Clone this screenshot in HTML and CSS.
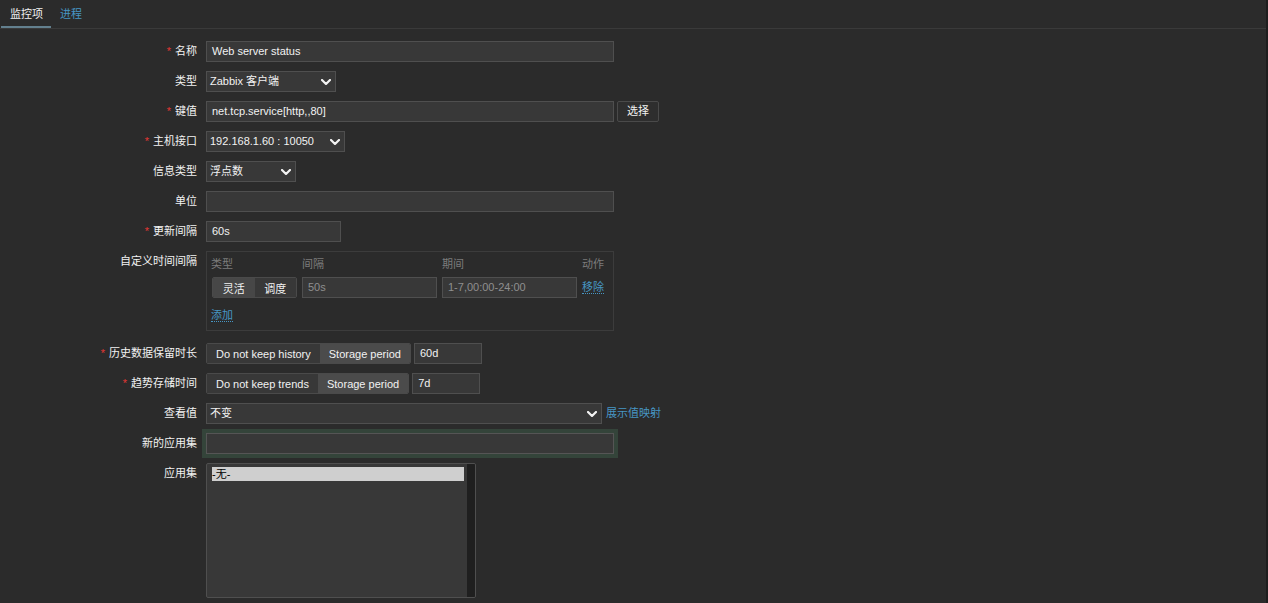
FILE: index.html
```html
<!DOCTYPE html>
<html lang="zh">
<head>
<meta charset="utf-8">
<title>监控项</title>
<link rel="stylesheet" href="styles.css">
</head>
<body>
<div class="page">
  <div class="tabs">
    <span class="tab active">监控项</span>
    <span class="tab">进程</span>
  </div>
  <div class="form">
    <div class="lbl"><span class="req">*</span>名称</div>
    <div class="field"><div class="input w408">Web server status</div></div>

    <div class="lbl">类型</div>
    <div class="field"><div class="select w130"><span>Zabbix 客户端</span><svg class="chev" viewBox="0 0 10 6"><path d="M1 1l4 4 4-4"/></svg></div></div>

    <div class="lbl"><span class="req">*</span>键值</div>
    <div class="field"><div class="input w408">net.tcp.service[http,,80]</div><div class="btn">选择</div></div>

    <div class="lbl"><span class="req">*</span>主机接口</div>
    <div class="field"><div class="select w139"><span>192.168.1.60 : 10050</span><svg class="chev" viewBox="0 0 10 6"><path d="M1 1l4 4 4-4"/></svg></div></div>

    <div class="lbl">信息类型</div>
    <div class="field"><div class="select w90"><span>浮点数</span><svg class="chev" viewBox="0 0 10 6"><path d="M1 1l4 4 4-4"/></svg></div></div>

    <div class="lbl">单位</div>
    <div class="field"><div class="input w408"></div></div>

    <div class="lbl"><span class="req">*</span>更新间隔</div>
    <div class="field"><div class="input w135">60s</div></div>

    <div class="lbl">自定义时间间隔</div>
    <div class="field">
      <div class="intervals">
        <div class="ih">类型</div><div class="ih">间隔</div><div class="ih">期间</div><div class="ih">动作</div>
        <div class="seg small"><span class="on">灵活</span><span>调度</span></div>
        <div class="input w135 dim">50s</div>
        <div class="input w135 dim">1-7,00:00-24:00</div>
        <div class="ilink"><span class="link dotted">移除</span></div>
        <div class="addrow"><span class="link dotted">添加</span></div>
      </div>
    </div>

    <div class="lbl"><span class="req">*</span>历史数据保留时长</div>
    <div class="field"><div class="seg"><span>Do not keep history</span><span class="on">Storage period</span></div><div class="input w68">60d</div></div>

    <div class="lbl"><span class="req">*</span>趋势存储时间</div>
    <div class="field"><div class="seg"><span>Do not keep trends</span><span class="on">Storage period</span></div><div class="input w68">7d</div></div>

    <div class="lbl">查看值</div>
    <div class="field"><div class="select w396"><span>不变</span><svg class="chev" viewBox="0 0 10 6"><path d="M1 1l4 4 4-4"/></svg></div><span class="link map">展示值映射</span></div>

    <div class="lbl">新的应用集</div>
    <div class="field"><div class="input w408 focus"></div></div>

    <div class="lbl">应用集</div>
    <div class="field">
      <div class="listbox">
        <div class="options"><div class="opt sel">-无-</div></div>
        <div class="sbar"></div>
      </div>
    </div>
  </div>
</div>
</body>
</html>
```

FILE: styles.css
```css
html, body {
  margin: 0;
  padding: 0;
  background: #2b2b2b;
}
body {
  font-family: Arial, "Liberation Sans", "Noto Sans CJK SC", sans-serif;
  font-size: 11px;
  color: #f2f2f2;
}
.page {
  width: 1266px;
  height: 603px;
  border-right: 2px solid #1e1e1e;
}
.tabs {
  display: flex;
  height: 28px;
  border-bottom: 1px solid #3a3a3a;
  padding-left: 1px;
}
.tab {
  display: flex;
  align-items: center;
  height: 26px;
  padding: 0 8px 0 9px;
  color: #4796c4;
  border-bottom: 2px solid transparent;
  white-space: nowrap;
}
.tab.active {
  color: #f2f2f2;
  border-bottom-color: #63808e;
}
.form {
  display: grid;
  grid-template-columns: 197px 1fr;
  column-gap: 9px;
  row-gap: 9px;
  padding-top: 12px;
}
.lbl {
  text-align: right;
  line-height: 21px;
  white-space: nowrap;
}
.req {
  color: #e33734;
  margin-right: 4px;
}
.field {
  display: flex;
  align-items: flex-start;
  gap: 3px;
  min-height: 21px;
}
.input, .select {
  box-sizing: border-box;
  height: 21px;
  line-height: 19px;
  border: 1px solid #4f4f4f;
  background: #383838;
  color: #f2f2f2;
  padding: 0 5px;
  white-space: nowrap;
  overflow: hidden;
}
.input.dim { color: #8f8f8f; }
.select {
  display: flex;
  align-items: center;
  justify-content: space-between;
  padding: 0 4px 0 3px;
}
.chev {
  width: 10px;
  height: 6px;
  fill: none;
  stroke: #f2f2f2;
  stroke-width: 2.2;
  stroke-linecap: round;
  stroke-linejoin: round;
}
.w408 { width: 408px; }
.w396 { width: 396px; }
.w130 { width: 130px; }
.w139 { width: 139px; }
.w135 { width: 135px; }
.w90 { width: 90px; }
.w68 { width: 68px; }
.btn {
  box-sizing: border-box;
  height: 21px;
  line-height: 19px;
  border: 1px solid #4a4a4a;
  border-radius: 2px;
  background: #2e2e2e;
  padding: 0 9px;
}
.intervals {
  box-sizing: border-box;
  width: 408px;
  height: 80px;
  margin-bottom: 3px;
  border: 1px solid #3c3c3c;
  padding: 3px 5px 0 4px;
  display: grid;
  grid-template-columns: 91px 140px 140px 1fr;
  grid-template-rows: 18px 21px 24px;
  row-gap: 4px;
}
.ih {
  color: #7c7c7c;
  line-height: 18px;
}
.ilink { line-height: 21px; }
.addrow {
  grid-column: 1 / -1;
  line-height: 18px;
  padding-top: 4px;
}
.seg {
  display: flex;
  box-sizing: border-box;
  height: 21px;
  border: 1px solid #4a4a4a;
  border-radius: 2px;
  overflow: hidden;
  white-space: nowrap;
}
.seg span {
  display: flex;
  align-items: center;
  justify-content: center;
  padding: 0 9px;
  background: #383838;
}
.seg span.on { background: #4b4b4b; }
.seg.small { width: 85px; margin-left: 1px; }
.seg.small span { flex: 1; padding: 0; }
.seg.small span.on { background: #474747; }
.link { color: #4796c4; }
.dotted { border-bottom: 1px dotted #4796c4; }
.map { line-height: 21px; margin-left: 1px; }
.input.focus {
  border-color: #555555;
  box-shadow: 0 0 0 4px #34443a;
}
.listbox {
  box-sizing: border-box;
  width: 270px;
  height: 135px;
  border: 1px solid #4f4f4f;
  border-radius: 2px;
  background: #383838;
  display: flex;
  overflow: hidden;
}
.options {
  flex: 1;
  padding: 3px 3px 0 5px;
}
.opt {
  height: 14px;
  line-height: 14px;
  color: #000;
}
.opt.sel { background: #cfcfcf; }
.sbar {
  width: 8px;
  background: #1f1f1f;
}
```
